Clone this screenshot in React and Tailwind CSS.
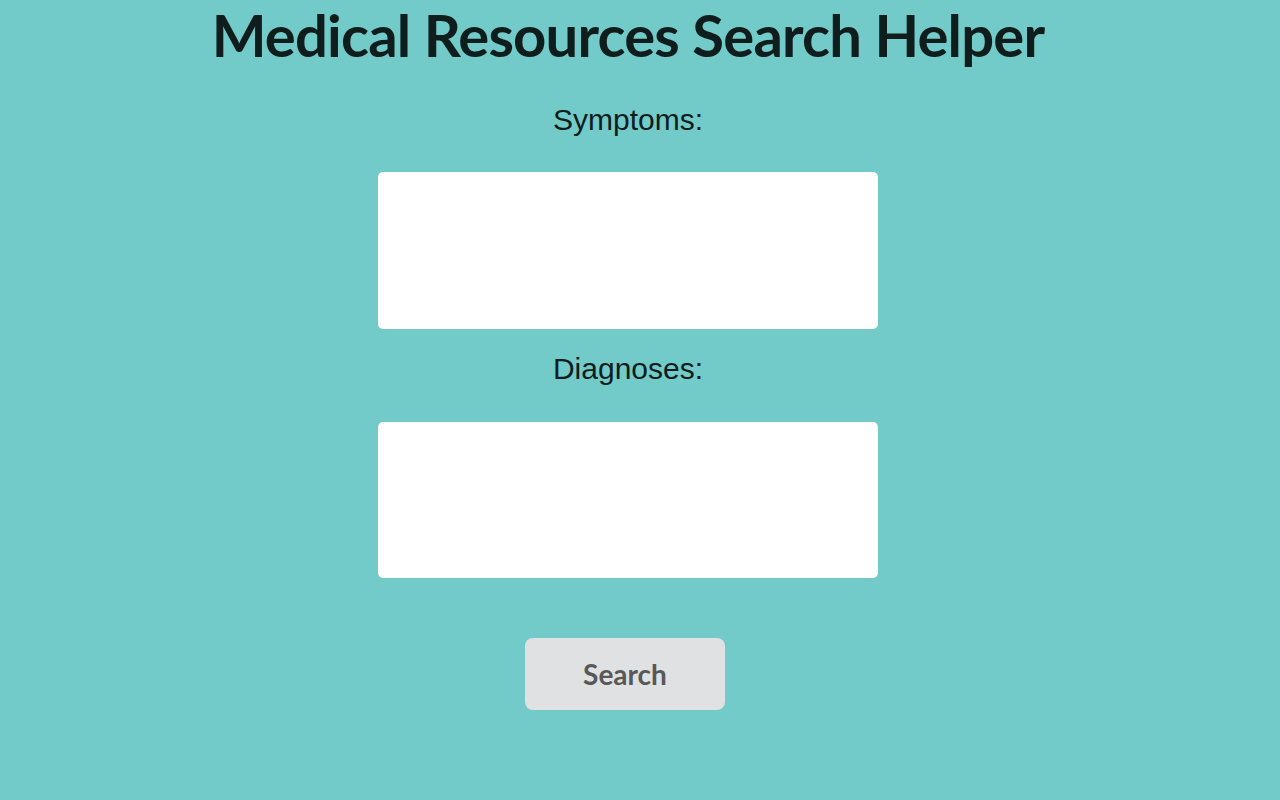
export default function App() {
  return (
    <div className="min-h-screen w-full bg-[#72cac9] pr-[24px]">
      <div className="flex flex-col items-center">
        {/* Heading */}
        <h1 className="h-[70px] text-[58px] leading-[70px] tracking-[-0.8px] font-bold text-[#0f1d1c] font-['Lato',sans-serif] whitespace-nowrap">
          Medical Resources Search Helper
        </h1>

        {/* Symptoms */}
        <label className="mt-[32px] h-[36px] text-[30px] leading-[36px] text-[#0f1d1c] font-['Liberation_Sans',Arial,sans-serif]">
          Symptoms:
        </label>
        <textarea className="mt-[34px] w-[500px] h-[157px] bg-white rounded-[5px] resize-none outline-none p-2" />

        {/* Diagnoses */}
        <label className="mt-[22px] h-[36px] text-[30px] leading-[36px] text-[#0f1d1c] font-['Liberation_Sans',Arial,sans-serif]">
          Diagnoses:
        </label>
        <textarea className="mt-[35px] w-[500px] h-[156px] bg-white rounded-[5px] resize-none outline-none p-2" />

        <button className="mt-[60px] ml-[-6px] w-[200px] h-[72px] bg-[#e0e1e3] rounded-[8px] text-[28px] font-bold text-[#585858] font-['Lato',sans-serif]">
          Search
        </button>
      </div>
    </div>
  );
}
